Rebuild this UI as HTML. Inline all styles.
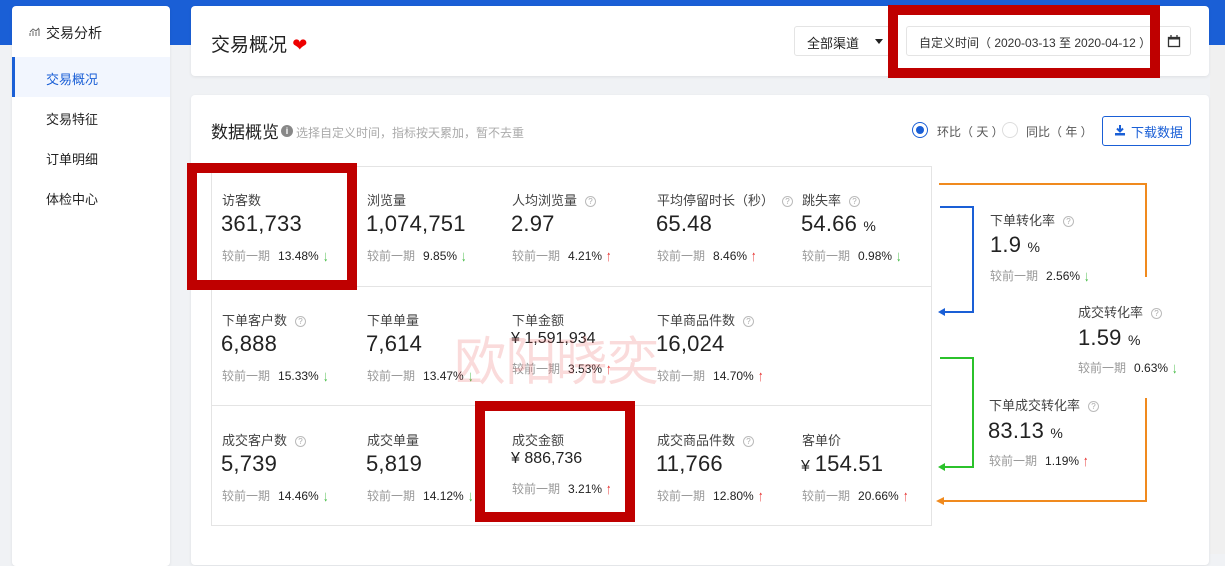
<!DOCTYPE html>
<html><head><meta charset="utf-8">
<style>
*{margin:0;padding:0;box-sizing:border-box}
body{width:1225px;height:554px;overflow:hidden;background:#f0f2f5;font-family:"Liberation Sans","Noto Sans CJK SC",sans-serif;color:#222;position:relative}
.a{position:absolute;white-space:nowrap}
.card{position:absolute;background:#fff;border-radius:4px;box-shadow:0 1px 3px rgba(0,0,0,.08)}
.lab{font-size:13px;color:#444}
.val{font-size:22px;color:#222;letter-spacing:0.2px}
.cmp{font-size:12px;color:#999}
.cmp b{font-weight:normal;color:#222;margin-left:8px}
.dn,.up{display:inline-block;font-size:15px;line-height:12px;transform:scaleX(0.7);vertical-align:-1px}
.dn{color:#3bb83b}
.up{color:#e4211f}
.q{display:inline-block;width:11px;height:11px;border:1px solid #bbb;border-radius:50%;font-size:8px;line-height:9px;text-align:center;color:#aaa;margin-left:8px;vertical-align:1px}
.red{position:absolute;border:10px solid #bf0000}
.pct{font-size:14px}
</style></head><body>
<div class="a" style="left:0;top:0;width:1225px;height:45px;background:#1a5fd6"></div>
<div class="a" style="left:1210px;top:45px;width:15px;height:509px;background:#f0f0f0"></div>

<!-- sidebar -->
<div class="card" style="left:12px;top:6px;width:158px;height:560px"></div>
<svg class="a" style="left:29px;top:27px" width="11" height="10"><path d="M1 9V6M4 9V4M7 9V5M10 9V2M1 5L4 2L7 4L10 1" stroke="#666" fill="none" stroke-width="1"/></svg>
<div class="a" style="left:46px;top:23px;font-size:14px;color:#222">交易分析</div>
<div class="a" style="left:12px;top:57px;width:158px;height:40px;background:#f2f6fe;border-left:3px solid #1a5fd6"></div>
<div class="a" style="left:46px;top:69px;font-size:13px;color:#1a5fd6">交易概况</div>
<div class="a" style="left:46px;top:109px;font-size:13px">交易特征</div>
<div class="a" style="left:46px;top:149px;font-size:13px">订单明细</div>
<div class="a" style="left:46px;top:189px;font-size:13px">体检中心</div>

<!-- header -->
<div class="card" style="left:191px;top:6px;width:1018px;height:70px"></div>
<div class="a" style="left:211px;top:30px;font-size:19px;color:#222">交易概况 <span style="color:#e00;font-size:18px">❤</span></div>
<div class="a" style="left:794px;top:26px;width:96px;height:30px;border:1px solid #e4e4e4;border-radius:3px"></div>
<div class="a" style="left:807px;top:33px;font-size:13px">全部渠道</div>
<div class="a" style="left:875px;top:39px;width:0;height:0;border-left:4px solid transparent;border-right:4px solid transparent;border-top:5px solid #222"></div>
<div class="a" style="left:906px;top:26px;width:285px;height:30px;border:1px solid #e4e4e4;border-radius:3px"></div>
<div class="a" style="left:919px;top:34px;font-size:12px;color:#333">自定义时间（ 2020-03-13 至 2020-04-12 ）</div>
<svg class="a" style="left:1167px;top:34px" width="14" height="14"><rect x="1.5" y="3.5" width="11" height="9" fill="none" stroke="#333" stroke-width="1.3"/><rect x="1.5" y="3.5" width="11" height="2" fill="#333"/><path d="M4 1v4M10 1v4" stroke="#333" stroke-width="1.3"/></svg>
<div class="red" style="left:888px;top:5px;width:272px;height:73px"></div>

<!-- main card -->
<div class="card" style="left:191px;top:95px;width:1018px;height:470px"></div>
<div class="a" style="left:211px;top:118px;font-size:17px">数据概览</div>
<div class="a" style="left:281px;top:125px;width:12px;height:12px;border-radius:50%;background:#888;color:#fff;font-size:9px;line-height:12px;text-align:center;font-weight:bold">i</div>
<div class="a" style="left:296px;top:124px;font-size:12px;color:#aaa">选择自定义时间，指标按天累加，暂不去重</div>
<div class="a" style="left:912px;top:122px;width:16px;height:16px;border:1px solid #1a5fd6;border-radius:50%"></div>
<div class="a" style="left:916px;top:126px;width:8px;height:8px;background:#1a5fd6;border-radius:50%"></div>
<div class="a" style="left:937px;top:123px;font-size:12px;color:#555">环比（ 天 ）</div>
<div class="a" style="left:1002px;top:122px;width:16px;height:16px;border:1px solid #ddd;border-radius:50%"></div>
<div class="a" style="left:1026px;top:123px;font-size:12px;color:#555">同比（ 年 ）</div>
<div class="a" style="left:1102px;top:116px;width:89px;height:30px;border:1px solid #1a5fd6;border-radius:3px"></div>
<svg class="a" style="left:1114px;top:124px" width="12" height="12"><path d="M6 1v6M3 4.5L6 7.5L9 4.5" stroke="#1a5fd6" stroke-width="2" fill="none"/><rect x="1" y="9" width="10" height="2.5" fill="#1a5fd6"/></svg>
<div class="a" style="left:1131px;top:122px;font-size:13px;color:#1a5fd6">下载数据</div>

<!-- table -->
<div class="a" style="left:211px;top:166px;width:721px;height:360px;border:1px solid #e4e4e4"></div>
<div class="a" style="left:211px;top:286px;width:721px;height:1px;background:#e4e4e4"></div>
<div class="a" style="left:211px;top:405px;width:721px;height:1px;background:#e4e4e4"></div>

<!-- row1 -->
<div class="a lab" style="left:222px;top:190px">访客数</div>
<div class="a val" style="left:221px;top:211px">361,733</div>
<div class="a cmp" style="left:222px;top:247px">较前一期<b>13.48% <span class="dn">↓</span></b></div>
<div class="a lab" style="left:367px;top:190px">浏览量</div>
<div class="a val" style="left:366px;top:211px">1,074,751</div>
<div class="a cmp" style="left:367px;top:247px">较前一期<b>9.85% <span class="dn">↓</span></b></div>
<div class="a lab" style="left:512px;top:190px">人均浏览量<span class="q">?</span></div>
<div class="a val" style="left:511px;top:211px">2.97</div>
<div class="a cmp" style="left:512px;top:247px">较前一期<b>4.21% <span class="up">↑</span></b></div>
<div class="a lab" style="left:657px;top:190px">平均停留时长（秒）<span class="q">?</span></div>
<div class="a val" style="left:656px;top:211px">65.48</div>
<div class="a cmp" style="left:657px;top:247px">较前一期<b>8.46% <span class="up">↑</span></b></div>
<div class="a lab" style="left:802px;top:190px">跳失率<span class="q">?</span></div>
<div class="a val" style="left:801px;top:211px">54.66 <span class="pct">%</span></div>
<div class="a cmp" style="left:802px;top:247px">较前一期<b>0.98% <span class="dn">↓</span></b></div>

<!-- row2 -->
<div class="a lab" style="left:222px;top:310px">下单客户数<span class="q">?</span></div>
<div class="a val" style="left:221px;top:331px">6,888</div>
<div class="a cmp" style="left:222px;top:367px">较前一期<b>15.33% <span class="dn">↓</span></b></div>
<div class="a lab" style="left:367px;top:310px">下单单量</div>
<div class="a val" style="left:366px;top:331px">7,614</div>
<div class="a cmp" style="left:367px;top:367px">较前一期<b>13.47% <span class="dn">↓</span></b></div>
<div class="a lab" style="left:512px;top:310px">下单金额</div>
<div class="a" style="left:511px;top:330px;font-size:16px">¥ 1,591,934</div>
<div class="a cmp" style="left:512px;top:360px">较前一期<b>3.53% <span class="up">↑</span></b></div>
<div class="a lab" style="left:657px;top:310px">下单商品件数<span class="q">?</span></div>
<div class="a val" style="left:656px;top:331px">16,024</div>
<div class="a cmp" style="left:657px;top:367px">较前一期<b>14.70% <span class="up">↑</span></b></div>

<!-- row3 -->
<div class="a lab" style="left:222px;top:430px">成交客户数<span class="q">?</span></div>
<div class="a val" style="left:221px;top:451px">5,739</div>
<div class="a cmp" style="left:222px;top:487px">较前一期<b>14.46% <span class="dn">↓</span></b></div>
<div class="a lab" style="left:367px;top:430px">成交单量</div>
<div class="a val" style="left:366px;top:451px">5,819</div>
<div class="a cmp" style="left:367px;top:487px">较前一期<b>14.12% <span class="dn">↓</span></b></div>
<div class="a lab" style="left:512px;top:430px">成交金额</div>
<div class="a" style="left:511px;top:450px;font-size:16px">¥ 886,736</div>
<div class="a cmp" style="left:512px;top:480px">较前一期<b>3.21% <span class="up">↑</span></b></div>
<div class="a lab" style="left:657px;top:430px">成交商品件数<span class="q">?</span></div>
<div class="a val" style="left:656px;top:451px">11,766</div>
<div class="a cmp" style="left:657px;top:487px">较前一期<b>12.80% <span class="up">↑</span></b></div>
<div class="a lab" style="left:802px;top:430px">客单价</div>
<div class="a val" style="left:801px;top:451px"><span style="font-size:16px">¥ </span>154.51</div>
<div class="a cmp" style="left:802px;top:487px">较前一期<b>20.66% <span class="up">↑</span></b></div>

<!-- arrows -->
<svg class="a" style="left:930px;top:170px" width="230" height="345">
<path d="M9 14H216V107" stroke="#f08a1e" stroke-width="2" fill="none"/>
<path d="M10 37H43V142H14" stroke="#1a5fd6" stroke-width="2" fill="none"/>
<path d="M8 142L15 138V146Z" fill="#1a5fd6"/>
<path d="M10 188H43V297H14" stroke="#2bc22b" stroke-width="2" fill="none"/>
<path d="M8 297L15 293V301Z" fill="#2bc22b"/>
<path d="M216 228V331H14" stroke="#f08a1e" stroke-width="2" fill="none"/>
<path d="M6 331L14 327V335Z" fill="#f08a1e"/>
</svg>
<div class="a lab" style="left:990px;top:210px">下单转化率<span class="q">?</span></div>
<div class="a val" style="left:990px;top:232px">1.9 <span class="pct">%</span></div>
<div class="a cmp" style="left:990px;top:267px">较前一期<b>2.56% <span class="dn">↓</span></b></div>
<div class="a lab" style="left:1078px;top:302px">成交转化率<span class="q">?</span></div>
<div class="a val" style="left:1078px;top:325px">1.59 <span class="pct">%</span></div>
<div class="a cmp" style="left:1078px;top:359px">较前一期<b>0.63% <span class="dn">↓</span></b></div>
<div class="a lab" style="left:989px;top:395px">下单成交转化率<span class="q">?</span></div>
<div class="a val" style="left:988px;top:418px">83.13 <span class="pct">%</span></div>
<div class="a cmp" style="left:989px;top:452px">较前一期<b>1.19% <span class="up">↑</span></b></div>

<!-- watermark -->
<div class="a" style="left:454px;top:320px;font-size:52px;color:rgba(230,90,90,0.22);letter-spacing:-1px">欧阳晓奕</div>

<!-- red boxes -->
<div class="red" style="left:187px;top:163px;width:170px;height:127px"></div>
<div class="red" style="left:475px;top:401px;width:160px;height:121px"></div>
</body></html>
